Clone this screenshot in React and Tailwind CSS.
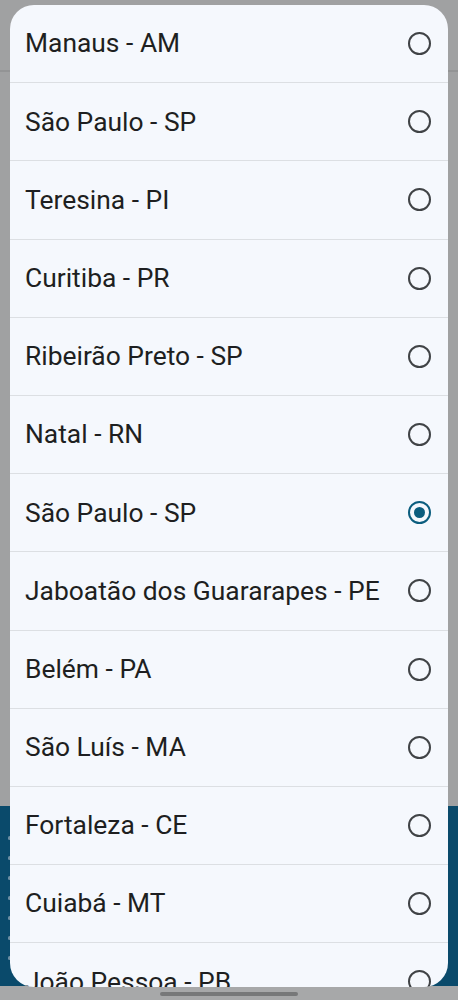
import React, { useState } from 'react';

const cities = [
  'Manaus - AM',
  'São Paulo - SP',
  'Teresina - PI',
  'Curitiba - PR',
  'Ribeirão Preto - SP',
  'Natal - RN',
  'São Paulo - SP',
  'Jaboatão dos Guararapes - PE',
  'Belém - PA',
  'São Luís - MA',
  'Fortaleza - CE',
  'Cuiabá - MT',
  'João Pessoa - PB',
];

const Radio = ({ checked }) => (
  <span
    className={
      'flex h-[23px] w-[23px] shrink-0 items-center justify-center rounded-full border-[2px] ' +
      (checked ? 'border-[#0b5d7e]' : 'border-[#404346]')
    }
  >
    {checked && <span className="h-[11px] w-[11px] rounded-full bg-[#0b5d7e]" />}
  </span>
);

const App = () => {
  const [selected, setSelected] = useState(6);

  return (
    <div className="relative h-[1000px] w-[458px] overflow-hidden bg-[#a0a1a2] font-['Roboto',sans-serif]">
      {/* Dimmed page behind the dialog */}
      <div className="flex h-full flex-col">
        <div className="h-[72px] border-b-[2px] border-[#939495] bg-[#a0a1a2]" />
        <div className="h-[734px] bg-[#a0a1a2]" />
        <div className="flex h-[180px] flex-col gap-[16px] bg-[#0a4a6b] pl-[8px] pt-[30px]">
          {[0, 1, 2, 3, 4, 5, 6].map(i => (
            <span key={i} className="h-[4px] w-[3px] rounded-full bg-[#6f8fa3]" />
          ))}
        </div>
        <div className="flex flex-1 justify-center bg-[#a7a8a9] pt-[6px]">
          <div className="h-[4px] w-[138px] rounded-full bg-[#777879]" />
        </div>
      </div>

      {/* Dialog */}
      <div className="absolute left-[10px] right-[10px] top-[5px] h-[982px] overflow-hidden rounded-[24px] bg-[#f5f8fd]">
        {cities.map((city, i) => (
          <div
            key={i}
            onClick={() => setSelected(i)}
            className="flex h-[78.2px] shrink-0 items-center justify-between border-b border-[#dcdfe3] pl-[15px] pr-[17px]"
          >
            <span className="text-[26.4px] leading-none text-[#1e1f21]">{city}</span>
            <Radio checked={selected === i} />
          </div>
        ))}
      </div>
    </div>
  );
};

export default App;
